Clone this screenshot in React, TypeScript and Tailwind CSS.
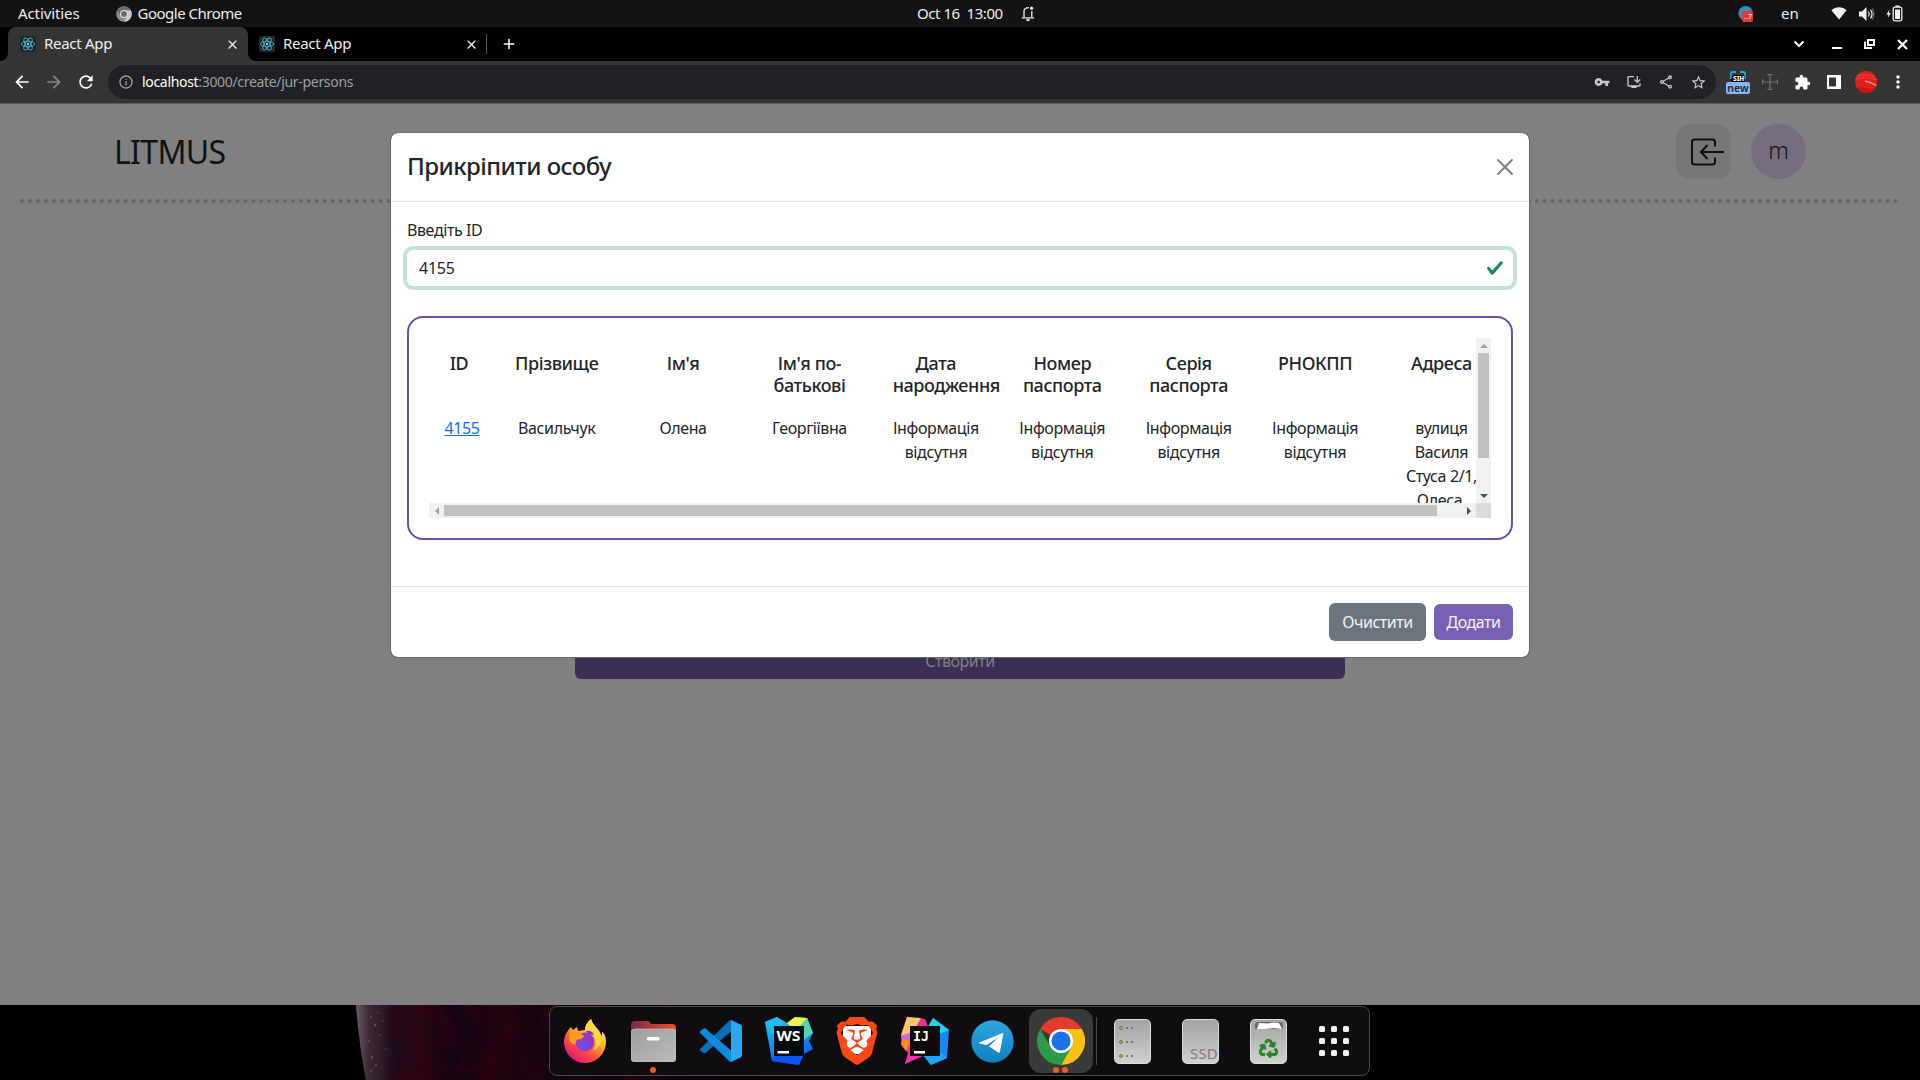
import React from 'react';
import {
  MdAdd, MdArrowBack, MdArrowForward, MdRefresh, MdInfoOutline, MdClose, MdVpnKey, MdInstallDesktop,
  MdOutlineShare, MdStarOutline, MdExtension, MdMoreVert,
} from 'react-icons/md';
import { FaRecycle } from 'react-icons/fa';
import { SiBrave } from 'react-icons/si';

const ReactLogo = () => (
  <svg width="16" height="16" viewBox="0 0 16 16" className="shrink-0">
    <rect width="16" height="16" rx="1" fill="#222529" />
    <g fill="none" stroke="#53a9bd" strokeWidth="0.9">
      <ellipse cx="8" cy="8" rx="6.8" ry="2.6" />
      <ellipse cx="8" cy="8" rx="6.8" ry="2.6" transform="rotate(60 8 8)" />
      <ellipse cx="8" cy="8" rx="6.8" ry="2.6" transform="rotate(120 8 8)" />
    </g>
    <circle cx="8" cy="8" r="1.2" fill="#61dafb" />
  </svg>
);

function TopBar() {
  return (
    <div className="flex h-[27px] shrink-0 items-center bg-[#131313] text-[15px] leading-[27px] text-[#eeeeee]">
      <div className="flex w-[917px] items-center pl-[18px]">
        <span className="tracking-[-0.1px]">Activities</span>
        <svg width="16" height="16" viewBox="0 0 16 16" className="ml-[36px]">
          <circle cx="8" cy="8" r="7.8" fill="#8d8d8d" />
          <path d="M8 4.2h6.8A7.8 7.8 0 0 1 8 15.8L11.4 10z" fill="#c9c9c9" />
          <path d="M1.2 4.2A7.8 7.8 0 0 1 14.8 4.2H8A3.8 3.8 0 0 0 4.6 10z" fill="#6b6b6b" />
          <circle cx="8" cy="8" r="3.9" fill="#e6e6e6" />
          <circle cx="8" cy="8" r="2.9" fill="#6b6b6b" />
        </svg>
        <span className="ml-[6px] tracking-[-0.5px]">Google Chrome</span>
      </div>
      <span className="w-[88px] whitespace-pre tracking-[-0.45px]">Oct 16  13:00</span>
      <svg width="14" height="16" viewBox="0 0 14 16" className="ml-[16px]">
        <path d="M3 11V5.5C3 3 4.6 1.6 8 1.6M10.8 5v6M.8 11.8h12.2" fill="none" stroke="#eee" strokeWidth="1.3" />
        <circle cx="10.6" cy="2.2" r="1.6" fill="#eee" />
        <path d="M5 13.2h4a2 2 0 0 1-4 0z" fill="#eee" />
      </svg>
      <div className="ml-auto flex items-center pr-[17px]">
        <svg width="16" height="16" viewBox="0 0 16 16">
          <circle cx="7.6" cy="7.2" r="7.2" fill="#2b8fc9" />
          <rect x="4" y="5" width="11" height="11" rx="2" fill="#e53935" />
          <text x="6" y="13" fontSize="7" fontWeight="700" fill="#f6c9c7" fontFamily="Noto Sans">..7</text>
        </svg>
        <span className="ml-[27px] w-[17px]">en</span>
        <svg width="16" height="13" viewBox="0 0 16 13" className="ml-[33px]">
          <path d="M.4 3.2C4.6-.7 11.4-.7 15.6 3.2L8 12.6z" fill="#f2f2f2" />
        </svg>
        <svg width="16" height="14" viewBox="0 0 16 14" className="ml-[12px]">
          <path d="M0 4.5h3L7.5 0v14L3 9.5H0z" fill="#f2f2f2" />
          <path d="M9.5 4.5q1.5 2.5 0 5M11.5 2.5q3 4.5 0 9" fill="none" stroke="#f2f2f2" strokeWidth="1.2" />
          <path d="M13.5 1.5q3 5.500 0 11" fill="none" stroke="#888" strokeWidth="1" />
        </svg>
        <svg width="17" height="17" viewBox="0 0 17 17" className="ml-[11px]">
          <path d="M3.600 4.500L.4 9.500h2l-.6 3.400 3-5H2.900z" fill="#f2f2f2" />
          <rect x="7.200" y="2.200" width="8.600" height="13.600" rx="1.800" fill="none" stroke="#f2f2f2" strokeWidth="1.300" />
          <rect x="9" y="4.500" width="5" height="9.500" fill="#f2f2f2" />
          <rect x="9.500" y=".5" width="4" height="1.500" fill="#f2f2f2" />
        </svg>
      </div>
    </div>
  );
}

function TabStrip() {
  return (
    <div className="flex h-[34px] shrink-0 bg-black text-[15px] tracking-[-0.3px] text-[#f1f1f1]">
      <div className="w-2 bg-[#353535]"><div className="h-full w-full rounded-br-[8px] bg-black" /></div>
      <div className="flex w-[240px] items-center rounded-t-[8px] bg-[#353535] pl-[12px]">
        <ReactLogo />
        <span className="mb-[2px] ml-2">React App</span>
        <MdClose className="mr-[8px] ml-auto size-[15px]" />
      </div>
      <div className="flex w-[238px] items-center bg-[#353535]">
        <div className="flex h-full w-full items-center rounded-bl-[8px] bg-black pl-[11px]">
          <ReactLogo />
          <span className="mb-[2px] ml-2">React App</span>
          <MdClose className="mr-[7px] ml-auto size-[15px]" />
        </div>
      </div>
      <div className="mt-[7px] h-[20px] w-px bg-[#555]" />
      <MdAdd className="mt-[8px] ml-[13px] size-[18px] text-white" />
      <div className="ml-auto flex items-center pr-[12px] text-white">
        <svg width="12" height="8" viewBox="0 0 12 8"><path d="M1.500 1.500L6 6l4.500-4.500" fill="none" stroke="#fff" strokeWidth="2" /></svg>
        <svg width="10" height="12" viewBox="0 0 10 12" className="ml-[27px]"><path d="M0 10h10" stroke="#fff" strokeWidth="2" /></svg>
        <svg width="11" height="10" viewBox="0 0 11 10" className="ml-[22px]">
          <rect x="4" y="1" width="6" height="5" fill="none" stroke="#fff" strokeWidth="2" />
          <path d="M1 2.500V9H8" fill="none" stroke="#fff" strokeWidth="1.800" />
        </svg>
        <svg width="11" height="11" viewBox="0 0 11 11" className="ml-[22px]"><path d="M1 1l9 9M10 1l-9 9" stroke="#fff" strokeWidth="2.200" /></svg>
      </div>
    </div>
  );
}

function Toolbar() {
  return (
    <div className="flex h-[43px] shrink-0 items-center border-b border-[#5c5c5c] bg-[#353535] text-white">
      <MdArrowBack className="ml-[12px] size-[20px]" />
      <MdArrowForward className="ml-[12px] size-[20px] text-[#868686]" />
      <MdRefresh className="ml-[12px] size-[20px]" />
      <div className="ml-[12px] flex h-[34px] w-[1608px] items-center rounded-full bg-[#202124] pl-[10px] text-[14px] tracking-[-0.32px] text-[#9aa0a6]">
        <MdInfoOutline className="size-[16px]" />
        <span className="mb-[2px] ml-[8px]"><span className="text-white">localhost</span>:3000/create/jur-persons</span>
        <div className="ml-auto flex items-center gap-4 pr-[9px] text-[#c8c9cb]">
          <MdVpnKey className="size-[16px]" />
          <MdInstallDesktop className="size-[16px]" />
          <MdOutlineShare className="size-[16px]" />
          <MdStarOutline className="size-[17px]" />
        </div>
      </div>
      <svg width="24" height="24" viewBox="0 0 24 24" className="ml-[10px]">
        <path d="M5 9V3.500Q5 2 6.500 2H10M14 2h3.500Q19 2 19 3.500V9" fill="none" stroke="#0fb5dd" strokeWidth="1.800" />
        <rect x="5.500" y="5" width="13" height="7" fill="#050505" />
        <text x="7" y="11.300" fontSize="6.500" fontWeight="800" fill="#fff" fontFamily="Noto Sans">SIH</text>
        <rect x="0" y="12" width="24" height="12" rx="2" fill="#8ab4f8" />
        <text x="12" y="21.500" fontSize="10.500" fontWeight="600" textAnchor="middle" fill="#1c2434" fontFamily="Noto Sans">new</text>
      </svg>
      <svg width="16" height="16" viewBox="0 0 16 16" className="ml-[12px]" fill="none" stroke="#717171" strokeWidth="1.200">
        <path d="M8 0v16M0 8h16M5.500.700h5M5.500 15.300h5M.7 5.500v5M15.300 5.500v5" />
      </svg>
      <MdExtension className="ml-[16px] size-[17px]" />
      <svg width="14" height="14" viewBox="0 0 14 14" className="ml-[16px]"><path d="M0 0h14v14H0zM2 2.500v9h7v-9z" fill="#fff" fillRule="evenodd" /></svg>
      <svg width="22" height="22" viewBox="0 0 22 22" className="ml-[14px]">
        <clipPath id="avatar"><circle cx="11" cy="11" r="11" /></clipPath>
        <g clipPath="url(#avatar)">
          <rect width="22" height="22" fill="#e0201c" />
          <path d="M0 8Q10 5 22 9M2 5Q10 2 20 6" stroke="#f0362e" strokeWidth="1.500" fill="none" />
          <path d="M10 10Q16 11 22 15" stroke="#f5918a" strokeWidth="1.500" fill="none" />
          <path d="M0 17Q10 15 22 20V22H0z" fill="#cf1513" />
        </g>
      </svg>
      <MdMoreVert className="ml-[11px] size-[20px]" />
    </div>
  );
}

function AppPage() {
  return (
    <div className="flex flex-col items-center">
      <div className="flex h-[99px] w-[1880px] items-center justify-between border-b-4 border-dotted border-[#66666b] pr-[94px] pl-[94px] text-[#101214]">
        <span className="text-[32px] tracking-[-0.65px]">LITMUS</span>
        <div className="flex gap-5">
          <div className="flex size-[55px] items-center justify-center rounded-[14px] bg-[#777777]">
            <svg width="34" height="28" viewBox="0 0 34 28" fill="none" stroke="#0f1012" strokeWidth="2" className="ml-[7px]">
              <path d="M25 8.500V4Q25 1.500 22.500 1.500H4.500Q2 1.500 2 4V24Q2 26.500 4.500 26.500H22.500Q25 26.500 25 24V19.500" />
              <path d="M34 14H11M17.500 7L11 14l6.500 7" />
            </svg>
          </div>
          <div className="flex size-[55px] items-center justify-center rounded-full bg-[#756c80] pb-[2px] text-[23px] font-light">m</div>
        </div>
      </div>
      <div className="mt-[440px] flex h-[36px] w-[770px] items-center justify-center rounded-[6px] bg-[#3b2f58] text-[16px] tracking-[-0.45px] text-[#808080]">
        Створити
      </div>
    </div>
  );
}

const info = ['Інформація', 'відсутня'];
const columns: { head: string[]; cell: string[]; link?: boolean }[] = [
  { head: ['ID'], cell: ['4155'], link: true },
  { head: ['Прізвище'], cell: ['Васильчук'] },
  { head: ["Ім'я"], cell: ['Олена'] },
  { head: ["Ім'я по-", 'батькові'], cell: ['Георгіївна'] },
  { head: ['Дата', 'народження'], cell: info },
  { head: ['Номер', 'паспорта'], cell: info },
  { head: ['Серія', 'паспорта'], cell: info },
  { head: ['РНОКПП'], cell: info },
  { head: ['Адреса'], cell: ['вулиця', 'Василя', 'Стуса 2/1,', 'Одеса,'] },
];

function ResultTable() {
  return (
    <div className="h-[224px] rounded-[16px] border-2 border-[#6a4fa8] p-[20px]">
      <div className="grid h-[180px] grid-cols-[1047px_15px] grid-rows-[165px_15px]">
        <div className="overflow-hidden">
          <div className="grid grid-cols-[29px_repeat(8,86.4px)] gap-x-10 pt-[14px] pl-[15.500px] text-center whitespace-nowrap">
            {columns.map((c, i) => (
              <div key={i}>
                <div className="h-[64px] text-[18px] leading-[22px] font-medium tracking-[-0.42px]">
                  {c.head.map((l) => <div key={l}>{l}</div>)}
                </div>
                <div className={c.link ? 'text-[16px] leading-[24px] tracking-[-0.38px] text-[#0d6efd] underline' : 'text-[16px] leading-[24px] tracking-[-0.38px]'}>
                  {c.cell.map((l) => <div key={l}>{l}</div>)}
                </div>
              </div>
            ))}
          </div>
        </div>
        <div className="flex flex-col items-center bg-[#f1f1f1]">
          <div className="flex h-[15px] items-center"><svg width="8" height="4" viewBox="0 0 8 4"><path d="M0 4L4 0l4 4z" fill="#a3a3a3" /></svg></div>
          <div className="h-[105px] w-[11px] bg-[#c1c1c1]" />
          <div className="mt-auto flex h-[15px] items-center"><svg width="8" height="4" viewBox="0 0 8 4"><path d="M0 0l4 4 4-4z" fill="#505050" /></svg></div>
        </div>
        <div className="flex items-center bg-[#f1f1f1]">
          <div className="flex w-[15px] justify-center"><svg width="4" height="8" viewBox="0 0 4 8"><path d="M4 0L0 4l4 4z" fill="#a3a3a3" /></svg></div>
          <div className="h-[11px] w-[993px] bg-[#c1c1c1]" />
          <div className="ml-auto flex w-[15px] justify-center"><svg width="4" height="8" viewBox="0 0 4 8"><path d="M0 0l4 4-4 4z" fill="#505050" /></svg></div>
        </div>
        <div className="bg-[#dcdcdc]" />
      </div>
    </div>
  );
}

function Modal() {
  return (
    <div className="absolute top-[28px] left-[390px] w-[1140px] rounded-[8px] border border-[#686868] bg-white bg-clip-padding text-[#212529]">
      <div className="flex h-[69px] items-center justify-between border-b border-[#dee2e6] px-4">
        <h2 className="mb-[2px] text-[24px] font-medium tracking-[-0.55px]">Прикріпити особу</h2>
        <svg width="16" height="16" viewBox="0 0 16 16" stroke="#7f7f7f" strokeWidth="1.900" strokeLinecap="round"><path d="M1 1l14 14M15 1L1 15" /></svg>
      </div>
      <div className="h-[384px] p-4">
        <div className="mb-2 h-[24px] text-[16px] leading-[24px] tracking-[-0.4px]">Введіть ID</div>
        <div className="mb-[30px] flex h-[36px] items-center justify-between rounded-[6px] bg-white px-[12px] text-[16px] tracking-[-0.25px] shadow-[0_0_0_4px_#c6e1d5]">
          <span>4155</span>
          <svg width="18" height="18" viewBox="0 0 8 8" className="mr-[-3px]"><path fill="#198754" d="M2.300 6.730.6 4.530c-.4-1.040.46-1.400 1.100-.8l1.100 1.400 3.400-3.800c.6-.63 1.600-.27 1.200.7l-4 4.600c-.43.5-.8.4-1.100.1z" /></svg>
        </div>
        <ResultTable />
      </div>
      <div className="flex h-[71px] items-center justify-end gap-2 border-t border-[#dee2e6] px-4 text-[16px] tracking-[-0.45px] text-[#f4f4f6]">
        <div className="flex h-[38px] w-[97px] items-center justify-center rounded-[6px] bg-[#6c757d]">Очистити</div>
        <div className="flex h-[36px] w-[79px] items-center justify-center rounded-[6px] bg-[#7761b3]">Додати</div>
      </div>
    </div>
  );
}

const Firefox = () => (
  <svg width="42" height="44" viewBox="0 0 42 44">
    <defs>
      <linearGradient id="ff1" x1=".85" y1=".1" x2=".25" y2="1"><stop offset="0" stopColor="#fff44f" /><stop offset=".35" stopColor="#ffb02e" /><stop offset=".65" stopColor="#ff4f3a" /><stop offset="1" stopColor="#e0127d" /></linearGradient>
      <radialGradient id="ff2" cx=".4" cy=".65"><stop offset="0" stopColor="#6a55e0" /><stop offset="1" stopColor="#9a35c8" /></radialGradient>
    </defs>
    <path d="M27 0c-4 3-6 7-6 11l-7 1-1-4-4 3-2-3C2 13 0 18 0 23a21 21 0 0 0 42 0c0-5-1-8-4-10 0 2 0 3-1 4-2-7-8-9-10-17z" fill="url(#ff1)" />
    <path d="M27 0c-4 3-6 7-6 11 4 0 7 2 9 5 3 4 3 11-1 16 7-4 9-9 8-16-2-7-8-9-10-16z" fill="#ffd93c" />
    <circle cx="21" cy="23" r="9.500" fill="url(#ff2)" />
    <path d="M6 10l4 2 4 0 6 5q-1 3-6 3.500-3 2-2.500 5-4 0-6.500-5z" fill="#ff9b1d" />
    <path d="M22 12q6-1 8 4-3-1-5 0z" fill="#8a35d0" />
  </svg>
);

const Files = () => (
  <svg width="45" height="41" viewBox="0 0 45 41">
    <defs>
      <linearGradient id="fl1"><stop offset="0" stopColor="#7c2550" /><stop offset="1" stopColor="#e8562a" /></linearGradient>
      <linearGradient id="fl2" x2="1" y2="1"><stop offset="0" stopColor="#9c9c9c" /><stop offset="1" stopColor="#bdbdbd" /></linearGradient>
    </defs>
    <path d="M0 4Q0 0 4 0H17Q19 0 20 3H41Q45 3 45 7V20H0z" fill="url(#fl1)" />
    <rect y="8" width="45" height="33" rx="4" fill="url(#fl2)" stroke="#d0d0d0" strokeWidth=".6" />
    <rect x="16" y="16" width="12.500" height="3.500" rx="1.200" fill="#fff" />
  </svg>
);

const VsCode = () => (
  <svg width="42" height="42" viewBox="0 0 42 42">
    <path d="M0 29q-.5 1 .5 2l3 2q1 .7 2 0L31 11.500V0q-1 0-2 1z" fill="#0a6fb8" />
    <path d="M0 13q-.5-1 .5-2l3-2.500q1-.700 2 0L31 30.500V42q-1 0-2-1z" fill="#0d8bdb" />
    <path d="M31 0l9.500 4.600Q42 5.400 42 7v28q0 1.600-1.500 2.400L31 42z" fill="#29a9f3" />
  </svg>
);

const WebStorm = () => (
  <svg width="48" height="48" viewBox="0 0 48 48">
    <defs><linearGradient id="ws" x2=".5" y2="1"><stop offset="0" stopColor="#1fd0e8" /><stop offset="1" stopColor="#0b62f5" /></linearGradient></defs>
    <path d="M0 5L12 0l10 6 8-6 12 1 6 15-4 8 4 8-9 5-5 11L7 44z" fill="url(#ws)" />
    <path d="M22 6l8-6 12 1 3 8-16 4z" fill="#eef34a" />
    <path d="M42 1l6 15-9 7-6-12z" fill="#4fd6b0" />
    <path d="M0 5l12-5 8 12-13 5z" fill="#1bbdf0" />
    <path d="M7 44l3-9h25l-1 13z" fill="#0a54f7" />
    <rect x="9" y="9" width="30" height="30" fill="#020b10" />
    <text x="11.500" y="24" fontSize="14" fontWeight="700" fill="#fff" textLength="24" lengthAdjust="spacingAndGlyphs" fontFamily="Noto Sans">WS</text>
    <rect x="12.500" y="34" width="11.500" height="2.500" fill="#fff" />
  </svg>
);

const Idea = () => (
  <svg width="48" height="48" viewBox="0 0 48 48">
    <path d="M6 0l18 2 5 12-8 24-17 9 3-11-7-8 2-5-2-6z" fill="#f0309a" />
    <path d="M6 0l14 1-8 14-12 4z" fill="#fbc96a" />
    <path d="M0 19l12-4-2 8-9 4z" fill="#c967f0" />
    <path d="M1 22l9 2-5 10-5-7z" fill="#ff8a1c" />
    <path d="M4 47l5-14 13 6z" fill="#f42fb0" />
    <path d="M32 1l16 12-2 28-16 7-9-11z" fill="#1688f0" />
    <path d="M32 1l16 12-10 4-12-6z" fill="#1fd2f2" />
    <path d="M46 41l-16 7-9-11 17-3z" fill="#1aa5f5" />
    <rect x="9" y="9" width="30" height="30" fill="#120a0a" />
    <text x="12" y="24" fontSize="14" fontWeight="700" fill="#fff" textLength="16" lengthAdjust="spacingAndGlyphs" fontFamily="DejaVu Sans Mono">IJ</text>
    <rect x="13" y="34" width="11" height="2.500" fill="#fff" />
  </svg>
);

const Brave = () => (
  <div className="relative size-[48px]">
    <div className="absolute top-[9px] left-[10px] h-[28px] w-[28px] rounded-b-[12px] bg-white" />
    <SiBrave className="absolute inset-0 size-[48px] text-[#fb4716]" />
  </div>
);

const Telegram = () => (
  <svg width="43" height="43" viewBox="0 0 43 43">
    <defs><linearGradient id="tg" x2="0" y2="1"><stop offset="0" stopColor="#2fa6df" /><stop offset="1" stopColor="#0f7fc0" /></linearGradient></defs>
    <circle cx="21.500" cy="21.500" r="21.200" fill="url(#tg)" />
    <path d="M8.500 22.500L31 13.200c1-.3 1.400.2 1.200 1.300L29 31.500c-.3 1.200-1 1.500-2 .9l-9-6.200 9.500-8.800-12 7.500-6.800-1.500c-.9-.3-.9-.6-.2-.9z" fill="#fff" />
  </svg>
);

const Chrome = () => (
  <svg width="48" height="48" viewBox="0 0 48 48">
    <path d="M24 24L3.200 12A24 24 0 0 1 44.800 12z" fill="#e33b2e" />
    <path d="M24 12H44.800A24 24 0 0 1 24 48L34.400 30z" fill="#fcc010" />
    <path d="M13.600 30L3.200 12A24 24 0 0 0 24 48L34.400 30z" fill="#2b9a4b" />
    <circle cx="24" cy="24" r="12" fill="#fff" />
    <circle cx="24" cy="24" r="9.600" fill="#1b73e8" />
  </svg>
);

const drive = 'flex h-[45px] w-[37px] rounded-[5px] border border-[#dcdcdc] bg-gradient-to-b from-[#a3a3a3] to-[#d0d0d0]';

function Dock() {
  return (
    <div className="relative h-[75px] shrink-0 bg-black">
      <svg width="1920" height="75" viewBox="0 0 1920 75" className="absolute inset-0">
        <defs>
          <linearGradient id="planet" gradientUnits="userSpaceOnUse" x1="356" y1="0" x2="1000" y2="0">
            <stop offset="0" stopColor="#6d5b68" /><stop offset=".02" stopColor="#3d2935" /><stop offset=".06" stopColor="#1f0c1c" />
            <stop offset=".1" stopColor="#2b0612" /><stop offset=".15" stopColor="#100516" /><stop offset=".22" stopColor="#22040f" />
            <stop offset=".32" stopColor="#120412" /><stop offset=".6" stopColor="#0c0208" /><stop offset="1" stopColor="#000" />
          </linearGradient>
          <filter id="grain" x="0" y="0" width="1" height="1" colorInterpolationFilters="sRGB">
            <feTurbulence type="fractalNoise" baseFrequency=".05 .035" numOctaves="4" seed="7" />
            <feColorMatrix values="0 0 0 0 .2  0 0 0 0 .01  0 0 0 0 .06  2 0 0 0 -.9" />
            <feComposite in2="SourceGraphic" operator="in" />
          </filter>
        </defs>
        <path d="M356 0Q359 40 366 75H1000V0z" fill="url(#planet)" />
        <path d="M390 0V75H700V0z" fill="#fff" filter="url(#grain)" />
        <g fill="#a8663f" opacity=".55">
          <circle cx="371" cy="12" r="1" /><circle cx="375" cy="20" r="1.200" /><circle cx="378" cy="8" r=".8" /><circle cx="369" cy="36" r="1" />
          <circle cx="372" cy="52" r="1.400" /><circle cx="376" cy="60" r="1" /><circle cx="371" cy="66" r="1" /><circle cx="380" cy="30" r=".8" />
          <circle cx="386" cy="44" r=".8" /><circle cx="383" cy="16" r=".8" />
        </g>
      </svg>
      <div className="relative mt-px ml-[549px] flex h-[70px] w-[821px] items-center rounded-[8px] border border-[#4a4a4a] bg-[#0f0d0f]">
        <div className="flex w-[68px] justify-center pl-px"><Firefox /></div>
        <div className="flex w-[68px] justify-center pl-[2px]"><Files /></div>
        <div className="flex w-[68px] justify-center pl-[2px]"><VsCode /></div>
        <div className="flex w-[68px] justify-center pl-[2px]"><WebStorm /></div>
        <div className="flex w-[68px] justify-center pl-[2px]"><Brave /></div>
        <div className="flex w-[68px] justify-center pl-[2px]"><Idea /></div>
        <div className="flex w-[68px] justify-center pl-px"><Telegram /></div>
        <div className="ml-[3px] flex h-[64px] w-[64px] items-center justify-center rounded-[12px] bg-[#3a3a3a]"><Chrome /></div>
        <div className="ml-[3px] h-[48px] w-px bg-[#4a4a4a]" />
        <div className={drive + ' ml-[17px] flex-col justify-between pt-[6px] pb-[5px] pl-[4px]'}>
          {[0, 1, 2].map((i) => (
            <div key={i} className="flex items-center gap-[3px]">
              <div className="size-[4px] rounded-full border border-[#6f7f4f] bg-[#8fc04a]" />
              <div className="size-[2px] bg-[#777]" />
              <div className="size-[2px] bg-[#777]" />
            </div>
          ))}
        </div>
        <div className={drive + ' ml-[31px] items-end justify-end text-[15px] leading-[20px] tracking-[0.2px] text-[#7d7d7d]'}>SSD</div>
        <div className={drive + ' ml-[31px] flex-col items-center'}>
          <svg width="30" height="9" viewBox="0 0 30 9" className="mt-[1px]">
            <path d="M1 8V4Q1 1 4 1H26Q29 1 29 4V8z" fill="#6b6b6b" />
            <path d="M3 8L5 2l9 .5 5-1 6 .5 3 6-9-1-8 1z" fill="#fff" />
          </svg>
          <FaRecycle className="mt-[9px] size-[19px] stroke-[#26851f] stroke-[24px] text-[#26851f]" />
        </div>
        <div className="ml-[32px] grid grid-cols-3 gap-[6px]">
          {Array.from({ length: 9 }, (_, i) => <div key={i} className="size-[6px] rounded-[1.500px] bg-[#f0f0f0]" />)}
        </div>
        <div className="absolute top-[60px] left-[100px] size-[6px] rounded-full bg-[#f05a24]" />
        <div className="absolute top-[60px] left-[503px] flex gap-[3px]">
          <div className="size-[6px] rounded-full bg-[#f05a24]" />
          <div className="size-[6px] rounded-full bg-[#f05a24]" />
        </div>
      </div>
    </div>
  );
}

export default function App() {
  return (
    <div className="flex h-[1080px] w-[1920px] flex-col overflow-hidden bg-black font-['Noto_Sans','Open_Sans',sans-serif]">
      <TopBar />
      <TabStrip />
      <Toolbar />
      <div className="relative h-[901px] shrink-0 overflow-hidden bg-[#808080]">
        <AppPage />
        <Modal />
      </div>
      <Dock />
    </div>
  );
}
